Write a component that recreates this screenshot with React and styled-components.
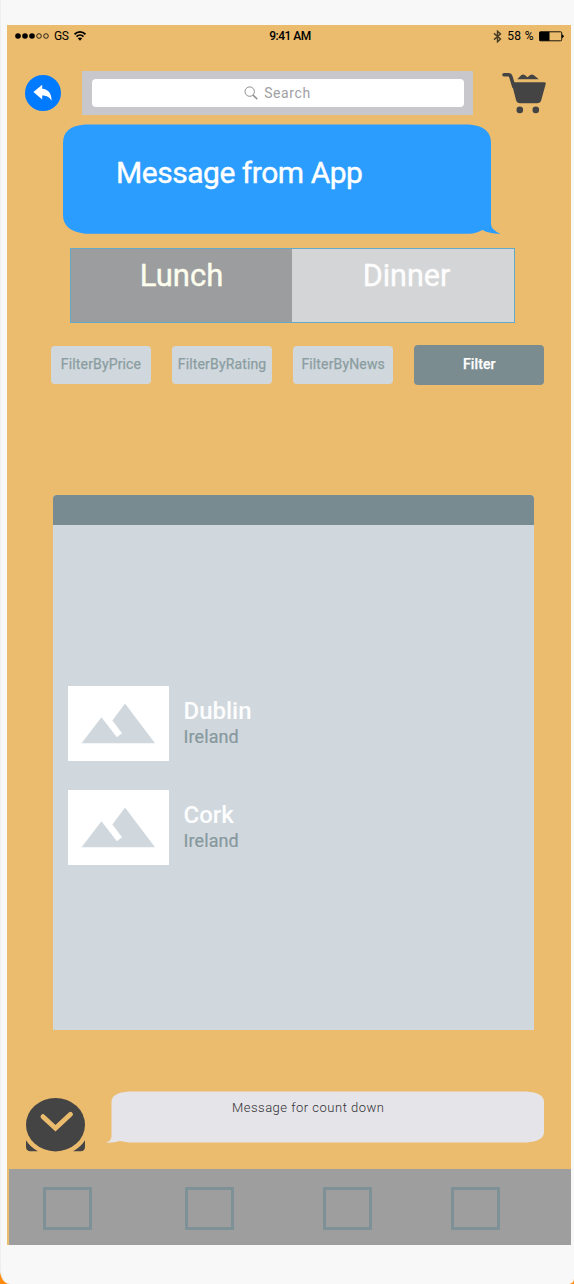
import React from 'react';
import styled, { createGlobalStyle } from 'styled-components';

const GlobalStyle = createGlobalStyle`
  * { box-sizing: border-box; }
  body { margin: 0; background: #ff8a0c; font-family: Roboto, "Liberation Sans", sans-serif; }
  svg { display: block; flex: none; }
`;

const Device = styled.div`
  width: 574px;
  height: 1284px;
  padding: 25px 3px 39px 6px;
  background: #f8f8f8;
  border-left: 1px solid #eeeeee;
  border-radius: 0 0 5px 10px / 0 0 5px 14px;
  overflow: hidden;
`;

const Screen = styled.main`
  display: flex;
  flex-direction: column;
  height: 1220px;
  background: #ebbc6e;
`;

const StatusBar = styled.header`
  display: grid;
  grid-template-columns: 1fr auto 1fr;
  align-items: center;
  height: 22px;
  padding: 0 6px 0 8px;
  font: 12px/14px Roboto, sans-serif;
  color: #000;
`;

const StatusGroup = styled.div`
  display: flex;
  align-items: center;
  justify-content: ${(p) => (p.$end ? 'flex-end' : 'flex-start')};
  gap: ${(p) => p.$gap}px;
  letter-spacing: ${(p) => (p.$end ? 0.4 : -0.4)}px;
`;

const Clock = styled.span`
  font-weight: 500;
  letter-spacing: -0.5px;
`;

const TopRow = styled.div`
  display: flex;
  align-items: center;
  height: 44px;
  margin-top: 24px;
  padding-left: 18px;
`;

const BackButton = styled.button`
  display: grid;
  place-items: center;
  width: 36px;
  height: 36px;
  padding: 0;
  border: 0;
  border-radius: 50%;
  background: #007aff;
`;

const SearchBar = styled.div`
  width: 391px;
  height: 44px;
  margin: 0 29px 0 21px;
  padding: 8px 9px 8px 10px;
  background: #c8c7cc;
`;

const SearchField = styled.div`
  display: flex;
  align-items: center;
  justify-content: center;
  gap: 6px;
  height: 28px;
  padding-right: 1px;
  border-radius: 4px;
  background: #fff;
  color: #a0a0a4;
  font-size: 14px;
  letter-spacing: 0.6px;
`;

const Bubble = styled.section`
  display: grid;
  width: ${(p) => p.$width}px;
  height: ${(p) => p.$height}px;
  margin: ${(p) => p.$margin};
  > * { grid-area: 1 / 1; }
`;

const BubbleTitle = styled.h1`
  margin: 31px 0 0 53px;
  font-size: 30px;
  line-height: 36px;
  font-weight: 400;
  color: #fff;
  -webkit-text-stroke: 0.4px #fff;
  letter-spacing: -0.47px;
`;

const BubbleNote = styled.p`
  margin: 9px 0 0 126px;
  font-size: 13px;
  line-height: 16px;
  font-weight: 300;
  color: #303033;
  letter-spacing: 0.5px;
`;

const Segments = styled.div`
  display: flex;
  width: 445px;
  height: 75px;
  margin: 14px 0 0 63px;
  border: 1px solid #65a9c4;
`;

const Segment = styled.div`
  width: ${(p) => (p.$active ? 221 : 222)}px;
  padding-top: 9px;
  text-align: center;
  font-size: ${(p) => (p.$active ? 31 : 30.5)}px;
  line-height: 36px;
  background: ${(p) => (p.$active ? '#9c9d9e' : '#d4d5d7')};
  color: ${(p) => (p.$active ? '#fdfeee' : '#fdfdfd')};
  -webkit-text-stroke: 0.4px;
  text-indent: ${(p) => (p.$active ? 0 : 7)}px;
`;

const Filters = styled.div`
  display: flex;
  align-items: center;
  height: 40px;
  margin: 22px 0 0 44px;
  gap: 21.1px;
`;

const FilterButton = styled.button`
  width: ${(p) => (p.$primary ? 130 : 100)}px;
  height: ${(p) => (p.$primary ? 40 : 38)}px;
  padding: 0 0 3px;
  border: 0;
  border-radius: 4px;
  background: ${(p) => (p.$primary ? '#7b8c91' : '#d0d8dd')};
  color: ${(p) => (p.$primary ? '#fff' : '#8b9da1')};
  font: ${(p) => (p.$primary ? 500 : 400)} 14px/18px Roboto, sans-serif;
  letter-spacing: ${(p) => (p.$primary ? 0.1 : 0.15)}px;
  -webkit-text-stroke: 0.25px;
  white-space: nowrap;
`;

const Panel = styled.section`
  width: 481px;
  height: 535px;
  margin: 110px 0 0 46px;
  border-radius: 4px 4px 0 0;
  background: #d0d8dd;
  overflow: hidden;
`;

const PanelHeader = styled.div`
  height: 30px;
  background: #788b90;
`;

const PlaceList = styled.div`
  display: flex;
  flex-direction: column;
  gap: 30px;
  padding: 161px 0 0 15px;
`;

const Place = styled.article`
  display: flex;
  gap: 15px;
  height: 74px;
`;

const Thumb = styled.div`
  width: 100.5px;
  height: 74.5px;
  background: #fff;
`;

const PlaceText = styled.div`
  padding-top: 11px;
`;

const City = styled.h2`
  margin: 0;
  font-size: 24px;
  line-height: 28px;
  font-weight: 500;
  color: #fdfdfe;
`;

const Country = styled.p`
  margin: 0;
  padding-top: 1px;
  font-size: 18px;
  line-height: 22px;
  letter-spacing: 0.1px;
  color: #87989d;
  -webkit-text-stroke: 0.2px;
`;

const CountdownRow = styled.div`
  display: flex;
  height: 62px;
  margin-top: 61px;
  padding-left: 19px;
`;

const TabBar = styled.nav`
  display: flex;
  height: 76px;
  margin: auto 0 0.5px 2px;
  padding: 18.5px 0 0 34px;
  background: #9e9e9e;
`;

const Tab = styled.div`
  width: 49px;
  height: 43px;
  margin-right: ${(p) => p.$after}px;
  border: 3px solid #7d9197;
`;

const SignalIcon = () => (
  <svg width="34" height="6" viewBox="0 0 34 6">
    {[3, 10, 17].map((x) => <circle key={x} cx={x} cy="3" r="2.8" />)}
    {[24, 31].map((x) => <circle key={x} cx={x} cy="3" r="2.3" fill="none" stroke="#000" strokeWidth=".8" />)}
  </svg>
);

const WifiIcon = () => (
  <svg width="12" height="10" viewBox="0 0 12 10" fill="none" stroke="#000" strokeWidth="1.8">
    <path d="M.6 3.3C3.6.1 8.4.1 11.4 3.3M2.5 5.6c2-2 5-2 7 0" />
    <path d="M3.8 7.3c1.2-1.2 3.2-1.2 4.4 0L6 9.7z" fill="#000" stroke="none" />
  </svg>
);

const BluetoothIcon = () => (
  <svg width="9" height="13" viewBox="0 0 9 13" fill="none" stroke="#473b26" strokeWidth="1.4">
    <path d="M1 3.4 7.5 9 4.5 11.8V1.2l3 2.8L1 9.6" />
  </svg>
);

const BatteryIcon = () => (
  <svg width="26" height="11" viewBox="0 0 26 11">
    <rect x=".5" y=".8" width="22.2" height="9" rx="1" fill="none" stroke="#000" strokeWidth=".9" />
    <path d="M.5.8h10v9H.5zM23 3.3l2.2 2-2.2 2z" />
  </svg>
);

const ReplyIcon = () => (
  <svg width="20" height="18" viewBox="0 0 20 18" fill="#fff">
    <path d="M.4 8 9.2.7v4.1c5.6.2 9.8 4.6 9.3 12.3-1.3-3.5-4.5-5.6-9.3-5.6v4.1z" />
  </svg>
);

const SearchIcon = () => (
  <svg width="14" height="14" viewBox="0 0 14 14" fill="none" stroke="#8e8e93">
    <circle cx="5.7" cy="5.6" r="4.7" />
    <path d="m9.1 9.1 4.1 4" strokeWidth="1.5" />
  </svg>
);

const CartIcon = () => (
  <svg width="44" height="41" viewBox="0 0 44 41" fill="#444">
    <path d="M2 1.8h4.6q1.6 0 2.2 1.8l3 10" fill="none" stroke="#444" strokeWidth="3.6" strokeLinecap="round" />
    <path d="M9.5 9.2H42.3q1.8 0 1.4 1.8L39.3 27q-.9 3.3-4.3 3.3H18.2q-3.3 0-4.2-3.3z" />
    <path d="M15.2 6.3 19.4 2q1.7-1.2 3.4 0l2.7 2.2L28.2 2q1.7-1.2 3.4 0l5.2 4.3z" />
    <circle cx="17.8" cy="36.9" r="3.3" /><circle cx="33.8" cy="36.9" r="3.3" />
  </svg>
);

const MountainIcon = () => (
  <svg width="100" height="74" viewBox="0 0 100 74" fill="#d0d8dd">
    <path d="M13.5 57.2 33.5 31.3 48.8 51.2 54 47.3 44.4 34.4 57 17.5 87 57.2z" />
  </svg>
);

const AlarmIcon = () => (
  <svg width="60" height="55" viewBox="0 0 60 55" fill="#444">
    <ellipse cx="29.5" cy="26.7" rx="29.5" ry="26.7" />
    <path d="M0 42.3q4 6.7 12 11H4.5Q0 53.3 0 48.5zM59 42.3q-4 6.7-12 11h7.5q4.5 0 4.5-4.8z" />
    <path d="M17 18.7 29.5 30.2 44.5 16.3" fill="none" stroke="#ebbc6e" strokeWidth="4.9" strokeLinecap="round" />
  </svg>
);

const places = ['Dublin', 'Cork'];
const filters = ['FilterByPrice', 'FilterByRating', 'FilterByNews'];
const tabGaps = [93.3, 88.7, 79.3, 0];

export default function App() {
  return (
    <>
      <GlobalStyle />
      <Device>
        <Screen>
          <StatusBar>
            <StatusGroup $gap={5}><SignalIcon /><span>GS</span><WifiIcon /></StatusGroup>
            <Clock>9:41 AM</Clock>
            <StatusGroup $end $gap={5}><BluetoothIcon /><span>58 %</span><BatteryIcon /></StatusGroup>
          </StatusBar>
          <TopRow>
            <BackButton aria-label="Back"><ReplyIcon /></BackButton>
            <SearchBar><SearchField><SearchIcon />Search</SearchField></SearchBar>
            <CartIcon />
          </TopRow>
          <Bubble $width={438} $height={110} $margin="9px 0 0 56px">
            <svg width="438" height="110" viewBox="0 0 438 110">
              <path d="M22 .4H406Q428 2 428 19V100Q428 106 437.5 109.7 427 110 419.5 106 413 109.7 406 109.7H22Q0 107 0 91V19Q0 2 22 .4Z" fill="#2a9dff" />
            </svg>
            <BubbleTitle>Message from App</BubbleTitle>
          </Bubble>
          <Segments>
            <Segment $active>Lunch</Segment>
            <Segment>Dinner</Segment>
          </Segments>
          <Filters>
            {filters.map((name) => <FilterButton key={name}>{name}</FilterButton>)}
            <FilterButton $primary>Filter</FilterButton>
          </Filters>
          <Panel>
            <PanelHeader />
            <PlaceList>
              {places.map((city) => (
                <Place key={city}>
                  <Thumb><MountainIcon /></Thumb>
                  <PlaceText><City>{city}</City><Country>Ireland</Country></PlaceText>
                </Place>
              ))}
            </PlaceList>
          </Panel>
          <CountdownRow>
            <Bubble as="div" $width={60} $height={55} $margin="6.5px 20px 0 0"><AlarmIcon /></Bubble>
            <Bubble $width={438} $height={52} $margin="0">
              <svg width="438" height="52" viewBox="0 0 438 52">
                <path d="M23 .5H420Q438 1.5 438 11V41Q438 50.5 420 51.4H23L14 50Q8 52 0 51.6 5.5 50 5.5 45V11Q5.5 1.5 23 .5Z" fill="#e5e4e9" />
              </svg>
              <BubbleNote>Message for count down</BubbleNote>
            </Bubble>
          </CountdownRow>
          <TabBar>
            {tabGaps.map((gap, i) => <Tab key={i} $after={gap} />)}
          </TabBar>
        </Screen>
      </Device>
    </>
  );
}
